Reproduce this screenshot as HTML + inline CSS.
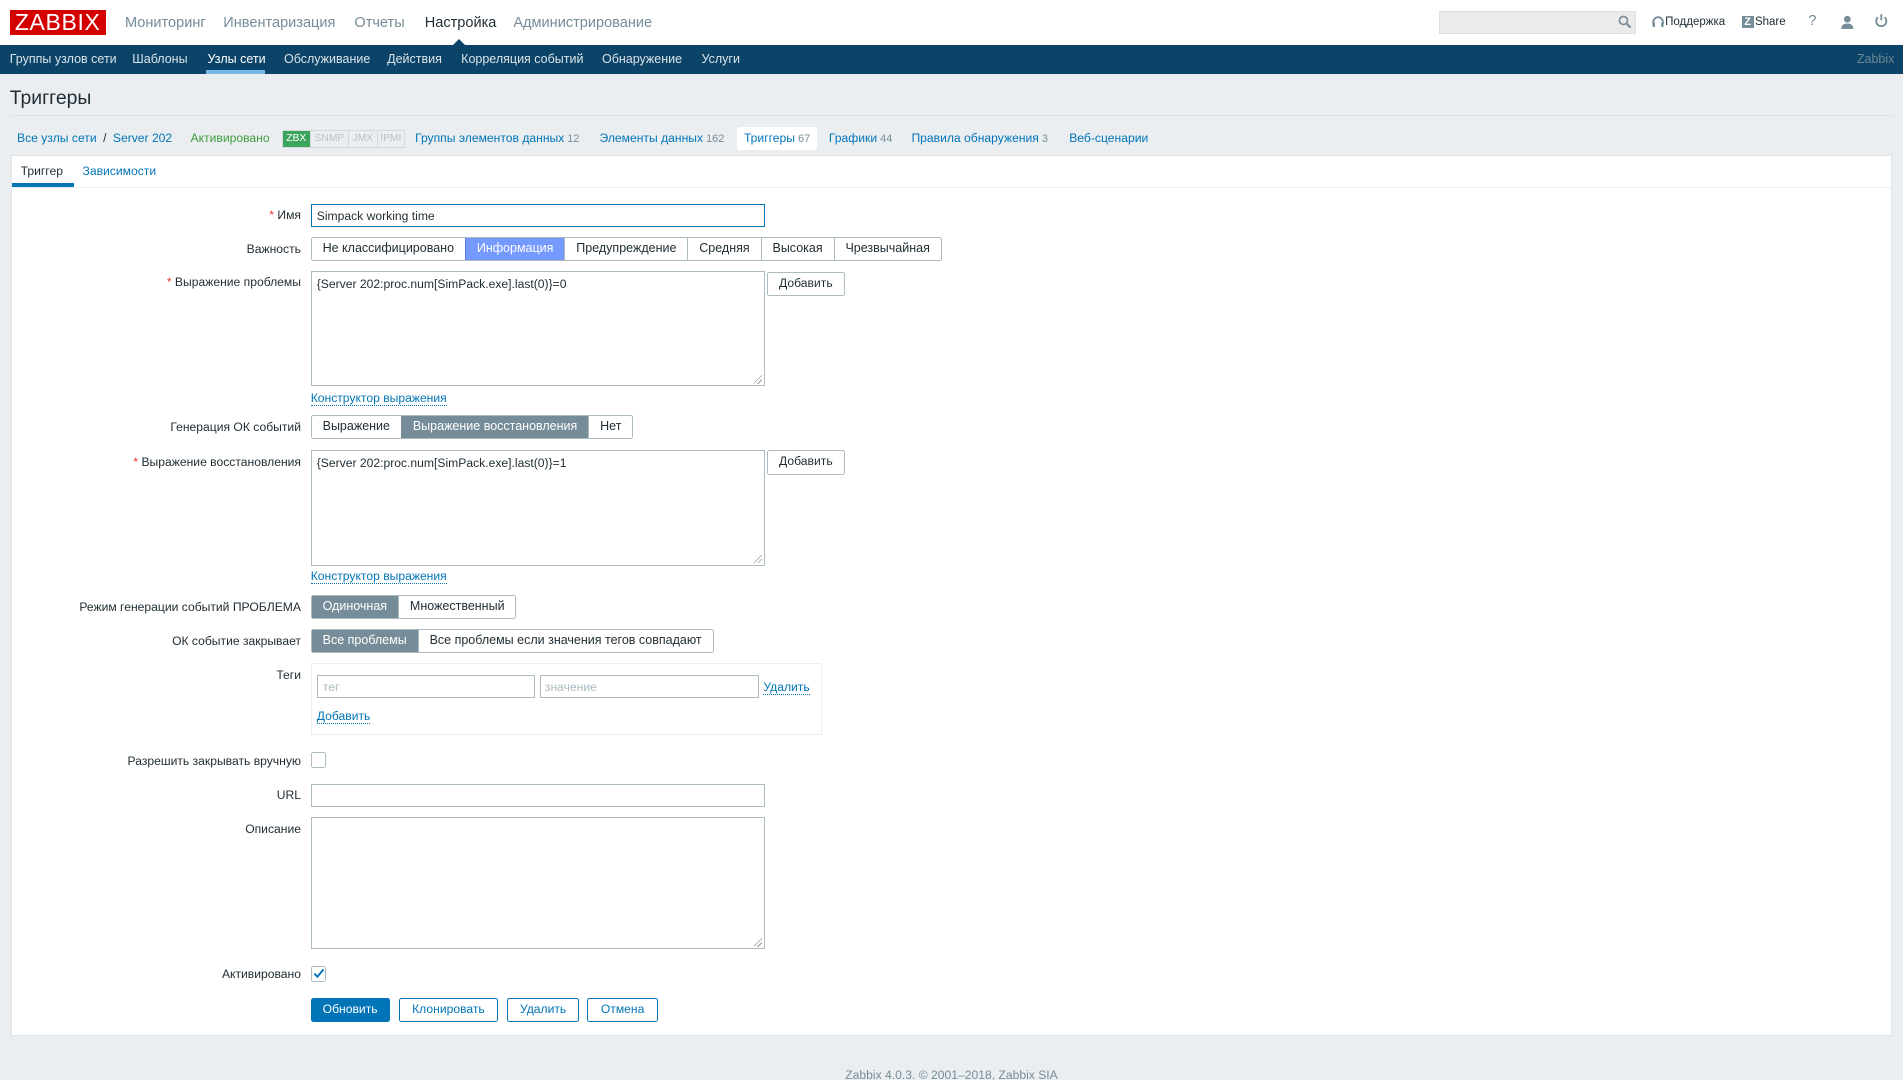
<!DOCTYPE html>
<html><head><meta charset="utf-8"><style>
html,body{margin:0;padding:0;width:1903px;height:1080px;overflow:hidden;background:#ebeef1}
#w{zoom:1.21365;width:1568px;height:890px;position:relative;font-family:"Liberation Sans",Arial,sans-serif;font-size:10px;color:#1f2c33;background:#ebeef1}
.a{position:absolute;white-space:nowrap}
a,.lk{color:#0275b8;text-decoration:none}
.dl{border-bottom:1px dotted #0275b8}
.lbl{position:absolute;right:1320px;text-align:right;white-space:nowrap}
.req{color:#e33734}
.inp{position:absolute;background:#fff;border:1px solid #acbbc2;box-sizing:border-box}
.seg{position:absolute;display:flex;border:1px solid #acbbc2;border-radius:2px;background:#fff;height:20px;box-sizing:border-box;font-size:10.3px}
.seg span{padding:0 9px;line-height:18px;border-left:1px solid #acbbc2}
.seg span:first-child{border-left:none}
.btn{position:absolute;border:1px solid #0275b8;color:#0275b8;background:#fff;height:20px;line-height:18px;box-sizing:border-box;text-align:center;border-radius:2px}
.grip{position:absolute;right:1px;bottom:1px;width:7px;height:7px;background:linear-gradient(135deg,transparent 45%,#999 45%,#999 52%,transparent 52%,transparent 70%,#999 70%,#999 77%,transparent 77%)}
</style></head><body><div id="w">
<!-- header -->
<div class="a" style="left:0;top:0;width:1568px;height:37px;background:#fff"></div>
<div class="a" style="left:8px;top:8px;width:79px;height:21px;background:#d40000;color:#fff;font-size:19px;line-height:21px;text-align:center;letter-spacing:0.5px">ZABBIX</div>
<div class="a" style="left:103px;top:12px;font-size:12px;color:#768d99">Мониторинг</div>
<div class="a" style="left:184px;top:12px;font-size:12px;color:#768d99">Инвентаризация</div>
<div class="a" style="left:292px;top:12px;font-size:12px;color:#768d99">Отчеты</div>
<div class="a" style="left:350px;top:12px;font-size:12px;color:#1f2c33">Настройка</div>
<div class="a" style="left:423px;top:12px;font-size:12px;color:#768d99">Администрирование</div>
<div class="a" style="left:1186px;top:9px;width:162px;height:19px;background:#ebebeb;border:1px solid #e0e0e0;box-sizing:border-box"></div>
<svg class="a" style="left:1333px;top:12px" width="11" height="11" viewBox="0 0 11 11"><circle cx="4.5" cy="4.5" r="3.3" fill="none" stroke="#768d99" stroke-width="1.4"/><line x1="7" y1="7" x2="10.5" y2="10.5" stroke="#768d99" stroke-width="1.8"/></svg>
<svg class="a" style="left:1361px;top:13px" width="10" height="10" viewBox="0 0 10 10"><path d="M1 7V5a4 4 0 0 1 8 0v2" fill="none" stroke="#768d99" stroke-width="1.5"/><rect x="0.5" y="5.5" width="2" height="3.5" fill="#768d99"/><rect x="7.5" y="5.5" width="2" height="3.5" fill="#768d99"/></svg>
<div class="a" style="left:1372px;top:13px;font-size:9.5px;color:#1f2c33">Поддержка</div>
<div class="a" style="left:1435px;top:13px;width:10px;height:10px;background:#768d99;color:#fff;font-size:9px;line-height:10px;text-align:center;font-weight:bold">Z</div>
<div class="a" style="left:1446px;top:13px;font-size:9.5px;color:#1f2c33">Share</div>
<div class="a" style="left:1490px;top:11px;font-size:12px;color:#768d99">?</div>
<svg class="a" style="left:1516px;top:12px" width="12" height="12" viewBox="0 0 12 12"><circle cx="6" cy="3.5" r="2.8" fill="#768d99"/><path d="M1 11.5c0-3 2-4.5 5-4.5s5 1.5 5 4.5z" fill="#768d99"/></svg>
<svg class="a" style="left:1544px;top:11px" width="12" height="12" viewBox="0 0 12 12"><path d="M3.2 3.5a4.2 4.2 0 1 0 5.6 0" fill="none" stroke="#768d99" stroke-width="1.5"/><line x1="6" y1="1" x2="6" y2="6" stroke="#768d99" stroke-width="1.5"/></svg>
<!-- nav -->
<div class="a" style="left:0;top:37px;width:1568px;height:24px;background:#0b4468"></div>
<div class="a" style="left:373px;top:32px;width:0;height:0;border-left:5px solid transparent;border-right:5px solid transparent;border-bottom:5px solid #0b4468"></div>
<div class="a" style="top:43px;left:8px;color:#fff;font-size:10.3px;opacity:.85">Группы узлов сети</div>
<div class="a" style="top:43px;left:109px;color:#fff;font-size:10.3px;opacity:.85">Шаблоны</div>
<div class="a" style="top:43px;left:171px;color:#fff;font-size:10.3px">Узлы сети</div>
<div class="a" style="left:170px;top:58px;width:48px;height:3px;background:#76b9e8"></div>
<div class="a" style="top:43px;left:234px;color:#fff;font-size:10.3px;opacity:.85">Обслуживание</div>
<div class="a" style="top:43px;left:319px;color:#fff;font-size:10.3px;opacity:.85">Действия</div>
<div class="a" style="top:43px;left:380px;color:#fff;font-size:10.3px;opacity:.85">Корреляция событий</div>
<div class="a" style="top:43px;left:496px;color:#fff;font-size:10.3px;opacity:.85">Обнаружение</div>
<div class="a" style="top:43px;left:578px;color:#fff;font-size:10.3px;opacity:.85">Услуги</div>
<div class="a" style="top:43px;left:1530px;color:#6d8796;font-size:10.3px">Zabbix</div>
<!-- title -->
<div class="a" style="left:8px;top:72px;font-size:16px;color:#1f2c33">Триггеры</div>
<div class="a" style="left:8px;top:95px;width:1552px;height:1px;background:#dde2e6"></div>
<!-- breadcrumbs -->
<div class="a lk" style="left:14px;top:108px">Все узлы сети</div>
<div class="a" style="left:85px;top:108px">/</div>
<div class="a lk" style="left:93px;top:108px">Server 202</div>
<div class="a" style="left:157px;top:108px;color:#3e9d3e">Активировано</div>
<div class="a" style="left:232px;top:107px;height:13px;display:flex;font-size:8.5px;line-height:13px;border:1px solid #d3dade">
<span style="color:#fff;padding:0 3px;background:#3aa55b">ZBX</span><span style="color:#b9c4c9;padding:0 3px;border-left:1px solid #d3dade">SNMP</span><span style="color:#b9c4c9;padding:0 3px;border-left:1px solid #d3dade">JMX</span><span style="color:#b9c4c9;padding:0 2px;border-left:1px solid #d3dade">IPMI</span></div>
<div class="a" style="left:342px;top:108px"><span class="lk">Группы элементов данных</span><span style="color:#768d99;font-size:9px"> 12</span></div>
<div class="a" style="left:494px;top:108px"><span class="lk">Элементы данных</span><span style="color:#768d99;font-size:9px"> 162</span></div>
<div class="a" style="left:607px;top:105px;width:66px;height:19px;background:#fff;border-radius:2px"></div>
<div class="a" style="left:613px;top:108px"><span class="lk">Триггеры</span><span style="color:#768d99;font-size:9px"> 67</span></div>
<div class="a" style="left:683px;top:108px"><span class="lk">Графики</span><span style="color:#768d99;font-size:9px"> 44</span></div>
<div class="a" style="left:751px;top:108px"><span class="lk">Правила обнаружения</span><span style="color:#768d99;font-size:9px"> 3</span></div>
<div class="a lk" style="left:881px;top:108px">Веб-сценарии</div>
<!-- panel -->
<div class="a" style="left:9px;top:128px;width:1550px;height:726px;background:#fff;border:1px solid #dfe4e7;box-sizing:border-box"></div>
<div class="a" style="left:10px;top:154px;width:1548px;height:1px;background:#ebeef1"></div>
<div class="a" style="left:17px;top:135px;color:#1f2c33">Триггер</div>
<div class="a" style="left:10px;top:151px;width:51px;height:3px;background:#0275b8"></div>
<div class="a lk" style="left:68px;top:135px">Зависимости</div>
<!-- form -->
<div class="lbl" style="top:171px"><span class="req">*</span> Имя</div>
<div class="inp" style="left:256px;top:168px;width:374px;height:19px;border-color:#0275b8"></div>
<div class="a" style="left:261px;top:172px;font-size:10px">Simpack working time</div>

<div class="lbl" style="top:199px">Важность</div>
<div class="seg" style="left:256px;top:195px">
<span>Не классифицировано</span><span style="background:#7499ff;color:#fff;border-color:#5a7fe6">Информация</span><span>Предупреждение</span><span>Средняя</span><span>Высокая</span><span>Чрезвычайная</span></div>

<div class="lbl" style="top:227px"><span class="req">*</span> Выражение проблемы</div>
<div class="inp" style="left:256px;top:223px;width:374px;height:95px"><div class="grip"></div></div>
<div class="a" style="left:261px;top:228px;font-size:10px">{Server 202:proc.num[SimPack.exe].last(0)}=0</div>
<div class="btn" style="left:632px;top:224px;width:64px;border-color:#acbbc2;color:#1f2c33">Добавить</div>
<div class="a" style="left:256px;top:322px"><span class="lk dl">Конструктор выражения</span></div>

<div class="lbl" style="top:346px">Генерация ОК событий</div>
<div class="seg" style="left:256px;top:342px"><span>Выражение</span><span style="background:#768d99;color:#fff;border-color:#768d99">Выражение восстановления</span><span>Нет</span></div>

<div class="lbl" style="top:375px"><span class="req">*</span> Выражение восстановления</div>
<div class="inp" style="left:256px;top:371px;width:374px;height:95px"><div class="grip"></div></div>
<div class="a" style="left:261px;top:376px;font-size:10px">{Server 202:proc.num[SimPack.exe].last(0)}=1</div>
<div class="btn" style="left:632px;top:371px;width:64px;border-color:#acbbc2;color:#1f2c33">Добавить</div>
<div class="a" style="left:256px;top:469px"><span class="lk dl">Конструктор выражения</span></div>

<div class="lbl" style="top:494px">Режим генерации событий ПРОБЛЕМА</div>
<div class="seg" style="left:256px;top:490px"><span style="background:#768d99;color:#fff;border-color:#768d99">Одиночная</span><span>Множественный</span></div>

<div class="lbl" style="top:522px">ОК событие закрывает</div>
<div class="seg" style="left:256px;top:518px"><span style="background:#768d99;color:#fff;border-color:#768d99">Все проблемы</span><span>Все проблемы если значения тегов совпадают</span></div>

<div class="lbl" style="top:550px">Теги</div>
<div class="a" style="left:256px;top:546px;width:421px;height:60px;border:1px solid #ebeef1;box-sizing:border-box"></div>
<div class="inp" style="left:261px;top:556px;width:180px;height:19px"></div>
<div class="a" style="left:266px;top:560px;color:#acbbc2">тег</div>
<div class="inp" style="left:445px;top:556px;width:180px;height:19px"></div>
<div class="a" style="left:449px;top:560px;color:#acbbc2">значение</div>
<div class="a" style="left:629px;top:560px"><span class="lk dl">Удалить</span></div>
<div class="a" style="left:261px;top:584px"><span class="lk dl">Добавить</span></div>

<div class="lbl" style="top:621px">Разрешить закрывать вручную</div>
<div class="a" style="left:256px;top:620px;width:13px;height:13px;border:1px solid #acbbc2;border-radius:2px;box-sizing:border-box;background:#fff"></div>

<div class="lbl" style="top:649px">URL</div>
<div class="inp" style="left:256px;top:646px;width:374px;height:19px"></div>

<div class="lbl" style="top:677px">Описание</div>
<div class="inp" style="left:256px;top:673px;width:374px;height:109px"><div class="grip"></div></div>

<div class="lbl" style="top:797px">Активировано</div>
<div class="a" style="left:256px;top:796px;width:13px;height:13px;border:1px solid #acbbc2;border-radius:2px;box-sizing:border-box;background:#fff"></div>
<svg class="a" style="left:257px;top:797px" width="11" height="11" viewBox="0 0 11 11"><path d="M2 5.5l2.5 2.5 5-6" fill="none" stroke="#0275b8" stroke-width="1.6"/></svg>

<div class="btn" style="left:256px;top:822px;width:65px;background:#0275b8;color:#fff">Обновить</div>
<div class="btn" style="left:329px;top:822px;width:81px">Клонировать</div>
<div class="btn" style="left:418px;top:822px;width:59px">Удалить</div>
<div class="btn" style="left:484px;top:822px;width:58px">Отмена</div>

<div class="a" style="left:0;width:1568px;top:880px;text-align:center;color:#768d99;font-size:10px">Zabbix 4.0.3. © 2001–2018, Zabbix SIA</div>
</div></body></html>
